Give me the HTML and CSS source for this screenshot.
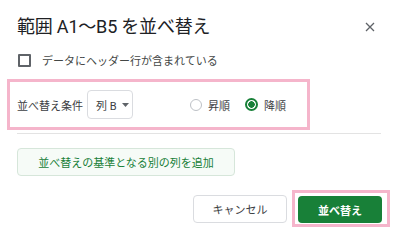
FILE: index.html
```html
<!DOCTYPE html>
<html lang="ja">
<head>
<meta charset="utf-8">
<link rel="stylesheet" href="styles.css">
</head>
<body>
<div class="dialog">
  <header class="head">
    <h1 class="title">範囲 A1〜B5 を並べ替え</h1>
    <span class="close"><svg width="10" height="10" viewBox="0 0 10 10"><path d="M1 1L9 9M9 1L1 9" stroke="#5f6368" stroke-width="1.3" fill="none"/></svg></span>
  </header>
  <label class="check"><span class="box"></span><span class="check-text">データにヘッダー行が含まれている</span></label>
  <div class="sortrow">
    <span class="label">並べ替え条件</span>
    <div class="select"><span>列 B</span><svg class="caret" width="7" height="4" viewBox="0 0 7 4"><path d="M0 0H7L3.5 4Z" fill="#5f6368"/></svg></div>
    <div class="radios">
      <label class="radio"><span class="dot"></span><span>昇順</span></label>
      <label class="radio on"><span class="dot"></span><span>降順</span></label>
    </div>
    <span class="hl hl-row"></span>
  </div>
  <div class="addwrap"><button class="add">並べ替えの基準となる別の列を追加</button></div>
  <footer class="foot">
    <button class="cancel">キャンセル</button>
    <button class="ok">並べ替え<span class="hl hl-ok"></span></button>
  </footer>
</div>
</body>
</html>
```
FILE: styles.css
```css
* { box-sizing: border-box; }
html, body { margin: 0; padding: 0; background: #fff; }
body { width: 400px; height: 233px; overflow: hidden; font-family: Roboto, "Noto Sans CJK JP", sans-serif; color: #202124; }
.dialog { padding: 0 18px 0 17px; }
.head { display: flex; align-items: center; justify-content: space-between; height: 40px; padding-top: 14px; }
.title { margin: 0; font-size: 18px; font-weight: 400; line-height: 26px; color: #202124; letter-spacing: -0.2px; }
.close { display: flex; margin-right: 7px; }
.check { display: flex; align-items: center; height: 16px; margin-top: 12px; gap: 11px; padding-left: 1px; }
.box { width: 13px; height: 13px; border: 2px solid #5f6368; border-radius: 1px; }
.check-text { font-size: 11px; color: #444746; }
.sortrow { position: relative; display: flex; align-items: center; padding: 22px 0 14px; border-bottom: 1px solid #e3e3e3; margin-right: 1px; }
.label { font-size: 11px; color: #3c4043; width: 70px; }
.select { display: flex; align-items: center; width: 46px; height: 29px; border: 1px solid #dadce0; border-radius: 4px; padding-left: 8px; font-size: 11px; color: #3c4043; gap: 5px; }
.radios { display: flex; align-items: center; margin-left: 57px; gap: 15px; }
.radio { display: flex; align-items: center; gap: 6px; font-size: 11px; color: #3c4043; }
.dot { width: 12px; height: 12px; border-radius: 50%; border: 1px solid #bdc1c6; }
.radio.on .dot { width: 13px; height: 13px; border: 2px solid #188038; background: radial-gradient(circle, #188038 0 3px, #fff 3.5px); }
.hl { position: absolute; border: 3px solid #f5b5cb; pointer-events: none; }
.hl-row { left: -10px; top: 11px; width: 303px; height: 51px; }
.addwrap { margin-top: 14px; }
.add { width: 218px; height: 28px; border: 1px solid #d6e6da; border-radius: 4px; background: #f6fbf7; color: #188038; font-family: Roboto, "Noto Sans CJK JP", sans-serif; font-size: 11px; padding: 0; }
.foot { display: flex; justify-content: flex-end; align-items: flex-start; gap: 11px; margin-top: 19px; }
.cancel { width: 94px; height: 28px; border: 1px solid #dadce0; border-radius: 4px; background: #fff; color: #3c4043; font-family: Roboto, "Noto Sans CJK JP", sans-serif; font-size: 11px; padding: 0; }
.ok { position: relative; width: 84px; height: 27px; margin-top: 1px; border: none; border-radius: 4px; background: #188038; color: #fff; font-family: Roboto, "Noto Sans CJK JP", sans-serif; font-size: 11px; font-weight: 700; padding: 0; }
.hl-ok { left: -6px; top: -6px; width: 98px; height: 37px; }
```
